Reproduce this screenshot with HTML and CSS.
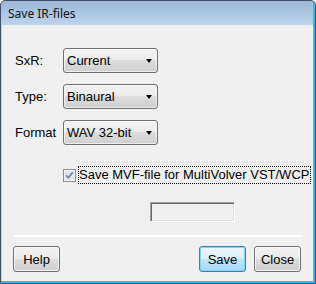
FILE: index.html
```html
<!DOCTYPE html>
<html lang="en">
<head>
    <meta charset="UTF-8">
    <title>Save IR-files</title>
    <link rel="stylesheet" href="styles.css">
</head>
<body>
    <div class="window">
        <div class="titlebar">Save IR-files</div>
        <div class="client">
            <div class="fields">
                <div class="row">
                    <span class="label">SxR:</span>
                    <div class="combo"><span>Current</span><i class="arrow"></i></div>
                </div>
                <div class="row">
                    <span class="label">Type:</span>
                    <div class="combo"><span>Binaural</span><i class="arrow"></i></div>
                </div>
                <div class="row">
                    <span class="label">Format</span>
                    <div class="combo"><span>WAV 32-bit</span><i class="arrow"></i></div>
                </div>
            </div>

            <div class="check-row">
                <span class="checkbox">
                    <svg width="13" height="13" viewBox="0 0 13 13">
                        <rect x="0.5" y="0.5" width="12" height="12" fill="#f4f4f4" stroke="#8e8f8f"/>
                        <rect x="2" y="2" width="9" height="9" fill="#e2e5ea"/>
                        <path d="M3.2 6.4 L5.4 8.8 L9.8 3.4" fill="none" stroke="#7084b4" stroke-width="1.7"/>
                    </svg>
                </span>
                <span class="check-label">Save MVF-file for MultiVolver VST/WCP</span>
            </div>

            <div class="edit-row">
                <div class="edit"></div>
            </div>

            <div class="separator"></div>

            <div class="buttons">
                <button class="btn">Help</button>
                <span class="spacer"></span>
                <button class="btn default">Save</button>
                <button class="btn">Close</button>
            </div>
        </div>
    </div>
</body>
</html>
```

FILE: styles.css
```css
body {
    margin: 0;
    padding: 0;
    background: white;
    font-family: "Liberation Sans", Arial, sans-serif;
    font-size: 13px;
    color: black;
}
.window {
    width: 316px;
    height: 284px;
    box-sizing: border-box;
    border: 1px solid #3e4f66;
    border-radius: 5px 5px 0 0;
    padding: 0 2px 2px 1px;
    background: linear-gradient(to bottom, #9cb8d7 0, #bcd4ec 24px, #c2d8ee 100%);
    box-shadow: inset -2px -2px 0 #36b9ea;
    display: flex;
    flex-direction: column;
}
.titlebar {
    height: 24px;
    line-height: 26px;
    padding-left: 6px;
    font-family: "Noto Sans", sans-serif;
    font-size: 12px;
    color: #111;
}
.client {
    flex: 1;
    background: #f0f0f0;
    display: flex;
    flex-direction: column;
}
.fields {
    padding: 23px 0 0 13px;
}
.row {
    display: flex;
    align-items: center;
    height: 25px;
    margin-bottom: 11px;
}
.row:last-child {
    margin-bottom: 0;
}
.label {
    width: 48px;
}
.combo {
    width: 95px;
    height: 25px;
    box-sizing: border-box;
    border: 1px solid #707070;
    border-radius: 3px;
    background: linear-gradient(to bottom, #f2f2f2, #ebebeb 50%, #dddddd 50%, #cfcfcf);
    box-shadow: inset 0 0 0 1px rgba(255, 255, 255, 0.6);
    display: flex;
    align-items: center;
    padding: 0 5px 0 3px;
}
.combo span {
    flex: 1;
}
.arrow {
    width: 0;
    height: 0;
    border-left: 3.5px solid transparent;
    border-right: 3.5px solid transparent;
    border-top: 4px solid black;
}
.check-row {
    display: flex;
    align-items: center;
    margin: 21px 0 0 61px;
    height: 18px;
}
.checkbox {
    display: flex;
    width: 13px;
    height: 13px;
}
.check-label {
    margin-left: 2px;
    padding: 1px 1px 1px 0;
    border: 1px dotted black;
    line-height: 14px;
}
.edit-row {
    margin-top: 18px;
    padding-left: 148px;
}
.edit {
    width: 85px;
    height: 20px;
    box-sizing: border-box;
    border: 1px solid;
    border-color: #a0a0a0 white white #a0a0a0;
    box-shadow: inset 1px 1px 0 #696969, inset -1px -1px 0 #e3e3e3;
    background: #f0f0f0;
}
.separator {
    height: 2px;
    background: white;
    margin: 13px 10px 0 12px;
}
.buttons {
    display: flex;
    gap: 8px;
    margin: 9px 12px 0 11px;
}
.spacer {
    flex: 1;
}
.btn {
    width: 47px;
    height: 26px;
    padding: 0;
    border: 1px solid #707070;
    border-radius: 3px;
    background: linear-gradient(to bottom, #f2f2f2, #ebebeb 50%, #dddddd 50%, #cfcfcf);
    box-shadow: inset 0 0 0 1px rgba(255, 255, 255, 0.7);
    font-family: "Liberation Sans", Arial, sans-serif;
    font-size: 13px;
    color: black;
}
.btn.default {
    border-color: #3c7fb1;
    background: linear-gradient(to bottom, #eaf6fd, #d9f0fc 50%, #bee6fd 50%, #a7d9f5);
    box-shadow: inset 0 0 0 1px #7fd4f6;
}
```
